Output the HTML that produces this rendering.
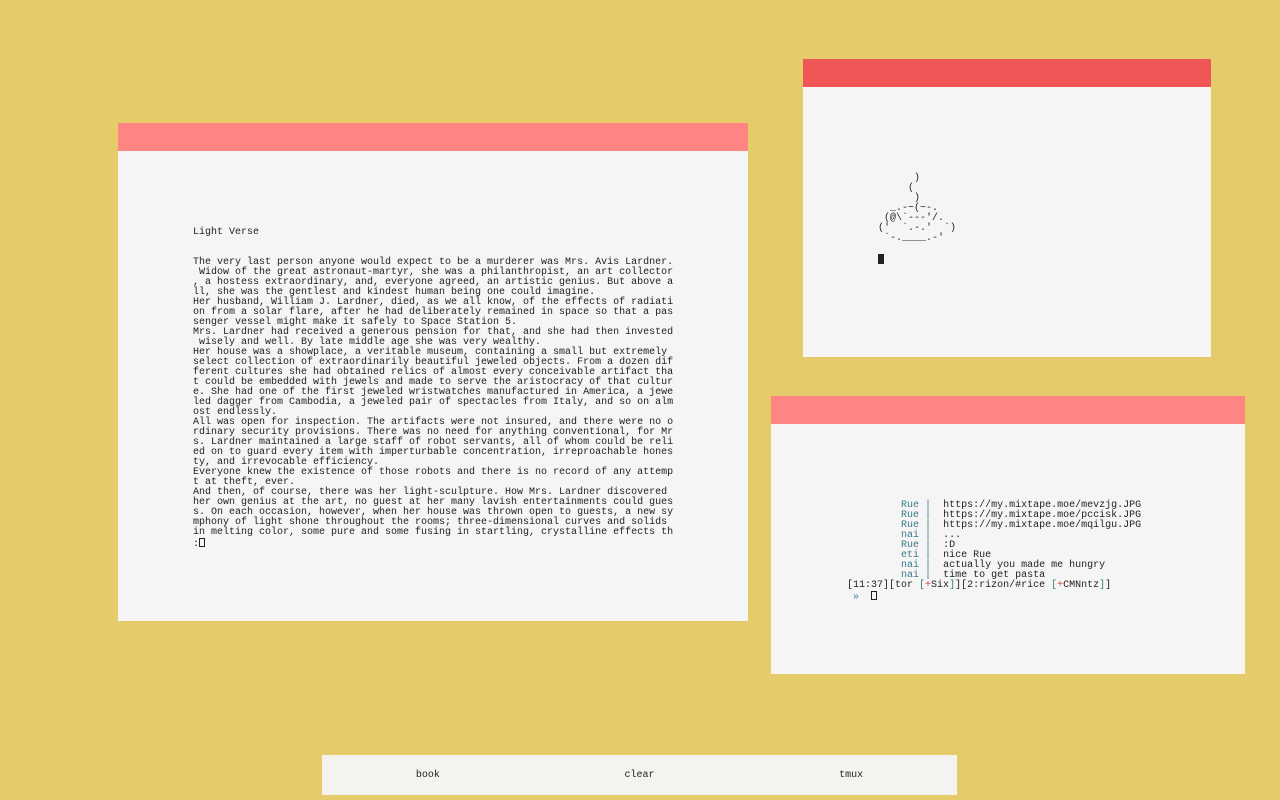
<!DOCTYPE html>
<html><head><meta charset="utf-8"><style>
*{margin:0;padding:0;box-sizing:border-box}
body{width:1280px;height:800px;background:#e5cb6a;position:relative;overflow:hidden;font-family:"Liberation Mono","DejaVu Sans Mono",monospace;font-size:10px;line-height:10px;color:#222}
.win{position:absolute;background:#f5f5f5}
.hd{position:absolute;left:0;top:0;right:0;height:28px}
pre{position:absolute;font-family:inherit;font-size:10px;line-height:10px;white-space:pre;margin:0}
.n{color:#3a7a8a}
.r{color:#e04040}
.cur{display:inline-block;width:6px;height:9px;border:1px solid #222;vertical-align:-1px}
.bar{position:absolute;left:322px;top:755px;width:635px;height:40px;background:#f4f3ef;display:flex}
.bar div{flex:1;text-align:center;line-height:41px;font-size:10px}
</style></head><body>
<div class="win" style="left:118px;top:123px;width:630px;height:498px">
<div class="hd" style="background:#ff8585"></div>
<pre style="left:75px;top:105px">Light Verse


The very last person anyone would expect to be a murderer was Mrs. Avis Lardner.
 Widow of the great astronaut-martyr, she was a philanthropist, an art collector
, a hostess extraordinary, and, everyone agreed, an artistic genius. But above a
ll, she was the gentlest and kindest human being one could imagine.
Her husband, William J. Lardner, died, as we all know, of the effects of radiati
on from a solar flare, after he had deliberately remained in space so that a pas
senger vessel might make it safely to Space Station 5.
Mrs. Lardner had received a generous pension for that, and she had then invested
 wisely and well. By late middle age she was very wealthy.
Her house was a showplace, a veritable museum, containing a small but extremely
select collection of extraordinarily beautiful jeweled objects. From a dozen dif
ferent cultures she had obtained relics of almost every conceivable artifact tha
t could be embedded with jewels and made to serve the aristocracy of that cultur
e. She had one of the first jeweled wristwatches manufactured in America, a jewe
led dagger from Cambodia, a jeweled pair of spectacles from Italy, and so on alm
ost endlessly.
All was open for inspection. The artifacts were not insured, and there were no o
rdinary security provisions. There was no need for anything conventional, for Mr
s. Lardner maintained a large staff of robot servants, all of whom could be reli
ed on to guard every item with imperturbable concentration, irreproachable hones
ty, and irrevocable efficiency.
Everyone knew the existence of those robots and there is no record of any attemp
t at theft, ever.
And then, of course, there was her light-sculpture. How Mrs. Lardner discovered
her own genius at the art, no guest at her many lavish entertainments could gues
s. On each occasion, however, when her house was thrown open to guests, a new sy
mphony of light shone throughout the rooms; three-dimensional curves and solids
in melting color, some pure and some fusing in startling, crystalline effects th
:<span class="cur"></span></pre>
</div>
<div class="win" style="left:803px;top:59px;width:408px;height:298px">
<div class="hd" style="background:#f05656"></div>
<pre style="left:75px;top:115px">      )
     (
      )
  _.-~(~-.
 (@\`---'/.
('  `.-.'  `)
 `-.____.-'

<span style="display:inline-block;width:6px;height:10px;background:#222"></span></pre>
</div>
<div class="win" style="left:771px;top:396px;width:474px;height:278px">
<div class="hd" style="background:#ff8585"></div>
<pre style="left:76px;top:105px">         <span class="n">Rue</span> <span class="n">|</span>  https://my.mixtape.moe/mevzjg.JPG
         <span class="n">Rue</span> <span class="n">|</span>  https://my.mixtape.moe/pccisk.JPG
         <span class="n">Rue</span> <span class="n">|</span>  https://my.mixtape.moe/mqilgu.JPG
         <span class="n">nai</span> <span class="n">|</span>  ...
         <span class="n">Rue</span> <span class="n">|</span>  :D
         <span class="n">eti</span> <span class="n">|</span>  nice Rue
         <span class="n">nai</span> <span class="n">|</span>  actually you made me hungry
         <span class="n">nai</span> <span class="n">|</span>  time to get pasta
[11:37][tor <span class="n">[</span><span class="r">+</span>Six<span class="n">]</span>][2:rizon/#rice <span class="n">[</span><span class="r">+</span>CMNntz<span class="n">]</span>]
 <span class="n">»</span>  <span class="cur"></span></pre>
</div>
<div class="bar"><div>book</div><div>clear</div><div>tmux</div></div>
</body></html>
